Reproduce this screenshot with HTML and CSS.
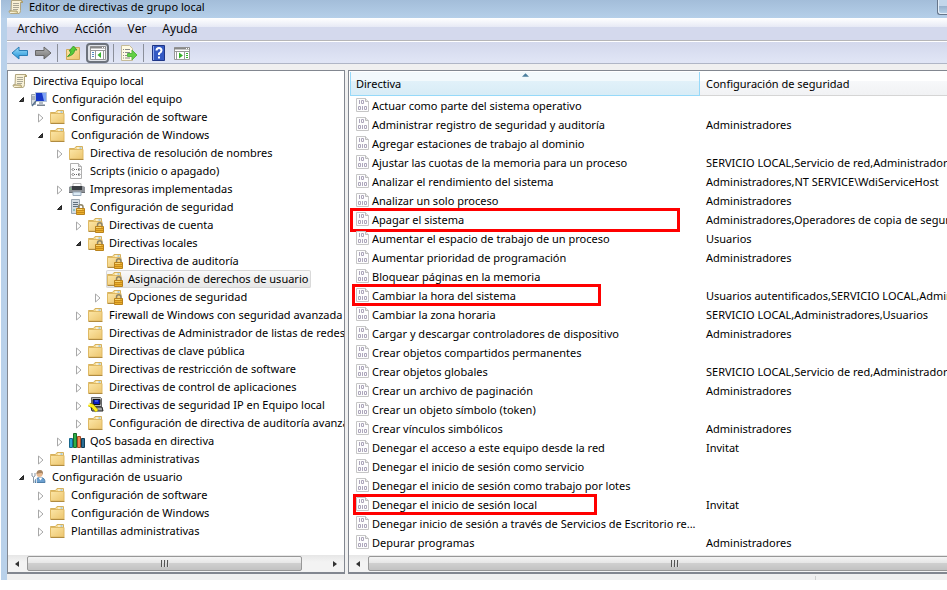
FILE: index.html
```html
<!DOCTYPE html>
<html lang="es">
<head>
<meta charset="utf-8">
<title>Editor de directivas de grupo local</title>
<link rel="stylesheet" href="styles.css">
</head>
<body>
<svg class="sprite" aria-hidden="true">
  <defs>
    <linearGradient id="gold" x1="0" y1="0" x2="1" y2="1"><stop offset="0" stop-color="#fce6a6"/><stop offset="1" stop-color="#ecc56e"/></linearGradient>
    <linearGradient id="blue" x1="0" y1="0" x2="0" y2="1"><stop offset="0" stop-color="#9fe0fb"/><stop offset="1" stop-color="#1c8fd6"/></linearGradient>
    <linearGradient id="grey" x1="0" y1="0" x2="0" y2="1"><stop offset="0" stop-color="#b5b5b5"/><stop offset="1" stop-color="#757575"/></linearGradient>
  </defs>
  <symbol id="folder" viewBox="0 0 16 16">
    <path d="M.500 4.500V3.500H5.500L7 1.500h6.500v3z" fill="#f5db90" stroke="#d6b15c"/>
    <path d="M8 3h5" stroke="#fff"/><path d="M10.500 3h2" stroke="#6aaee0"/>
    <path d="M.500 4.500h13.500v9.500h-13.500z" fill="url(#gold)" stroke="#dfb964"/>
    <path d="M.500 14.500h14" stroke="#b08b40"/>
  </symbol>
  <symbol id="lock" viewBox="0 0 16 16">
    <path d="M9.500 10V8a2 2 0 0 1 4.500 0v2" fill="none" stroke="#8d8468" stroke-width="1.500"/>
    <path d="M7.500 9.500h8v6h-8z" fill="#eab02f" stroke="#b9821c"/><path d="M8 11.500h7M8 13.500h7" stroke="#c98b18"/><path d="M8 10.500h5" stroke="#f7d672"/>
  </symbol>
  <symbol id="locked" viewBox="0 0 16 16"><use href="#folder"/><use href="#lock"/></symbol>
  <symbol id="scroll" viewBox="0 0 16 16">
    <path d="M3.500 1.500h9.500q1.500 0 1.500 2h-2v8q0 3-2 3h-8q-1.500-.500-1.500-2.500h2z" fill="#f8f1d6" stroke="#b0a57f"/>
    <path d="M5 4.500h6M5 6.500h6M5 8.500h6M5 10.500h5" stroke="#aaa796"/>
    <path d="M1.500 12h7.500q0 2 1.500 2.500" fill="#e6d7a0" stroke="#a89a6c"/><path d="M12.500 3.500h2q0-2-1.500-2" fill="#d9c88b" stroke="#a89a6c"/>
  </symbol>
  <symbol id="computer" viewBox="0 0 16 16">
    <path d="M.500 3.500h4v10h-4z" fill="#d8dde3" stroke="#9aa4ae"/><path d="M1 6h3M1 8h3" stroke="#7c8793"/>
    <path d="M4.500 1.500h11v9h-11z" fill="#1737c8" stroke="#b4c3d6"/><path d="M11 2h4v8h-2z" fill="#7ea3f6"/>
    <path d="M8 11h4v2h2v2H6v-2h2z" fill="#b2bac4"/><path d="M6 14.500h8" stroke="#78838f"/>
    <path d="M1 15l4-5" stroke="#59738f" stroke-width="1.500"/>
  </symbol>
  <symbol id="scripts" viewBox="0 0 16 16">
    <path d="M1.500.500h8l3 3v12h-11z" fill="#fcfcfc" stroke="#b0b0b0"/><path d="M9.500.500v3h3" fill="#ddd" stroke="#b0b0b0"/>
    <path d="M4.500 5L3 6.500 4.500 8M9.500 5L11 6.500 9.500 8M4.500 10L3 11.500 4.500 13M9.500 10l1.500 1.500L9.500 13" fill="none" stroke="#666"/>
    <path d="M5 6.500h1m1 0h1m1 0h1M5 11.500h1m1 0h1m1 0h1" stroke="#666"/>
  </symbol>
  <symbol id="printer" viewBox="0 0 16 16">
    <path d="M4 2.500h8v5H4z" fill="#fff" stroke="#bbb"/>
    <path d="M0 6l2-1h12l2 1v6H0z" fill="#8f9398"/><path d="M3 5h10v4H3z" fill="#3b3f44"/><path d="M0 11.500h16" stroke="#6c7075"/>
    <path d="M4 11h8v3.500H4z" fill="#dcebf5" stroke="#9ab"/><path d="M1 8h1" stroke="#6e6"/>
  </symbol>
  <symbol id="server" viewBox="0 0 16 16">
    <path d="M2.500.500h8v14h-8z" fill="#d5dde4" stroke="#9aa6b1"/><path d="M4 3.500h5M4 5.500h5M4 7.500h5" stroke="#61707e"/><path d="M4 11h2" stroke="#4a9"/><use href="#lock"/>
  </symbol>
  <symbol id="ipsec" viewBox="0 0 16 16">
    <path d="M3.500.500h9l1 1v8h-10z" fill="#b9b9b9" stroke="#666"/><path d="M5 2.500h7v5H5z" fill="#0a1cc0" stroke="#111"/><path d="M7 4h3" stroke="#6d8cff"/>
    <path d="M3 10h11l1 4H4z" fill="#a3a3a3" stroke="#222"/>
    <path d="M1 7.500l3.500 1.500L9 14" fill="none" stroke="#777000" stroke-width="4"/><path d="M.500 7.500l4 1.500L9 14" fill="none" stroke="#ffee18" stroke-width="3"/><path d="M0 7h2" stroke="#fff"/>
  </symbol>
  <symbol id="qos" viewBox="0 0 16 16">
    <path d="M.500 5.500h3v9h-3z" fill="#27a7d8" stroke="#17668c"/><path d="M4.500.500h3v14h-3z" fill="#2fae48" stroke="#176b2b"/>
    <path d="M8.500 3.500h3v11h-3z" fill="#f08450" stroke="#a84a20"/><path d="M12.500 5.500h3v9h-3z" fill="#2b6e93" stroke="#123c58"/>
  </symbol>
  <symbol id="user" viewBox="0 0 16 16">
    <path d="M4 13.500q0-5 5.500-5 4.500 0 4.500 5z" fill="#6b9fd0" stroke="#4f7fa9"/><path d="M7.500 8.500l2 3 2-3z" fill="#fff"/>
    <circle cx="8.500" cy="5" r="3" fill="#e8b990"/><path d="M5.500 5q0-4 3.500-4T12 6l-1-2q-3 0-5.500 1z" fill="#a58462"/>
    <path d="M1 4v3l1.500 1L4 7V4M2.500 8v6" fill="none" stroke="#8795a3"/><path d="M5.500 9v5" stroke="#d8dfe6"/>
  </symbol>
  <symbol id="policy" viewBox="0 0 14 14">
    <path d="M.500.500h9l3 3v10h-12z" fill="#fdfdfd" stroke="#c6c6c6"/><path d="M9.500.500v3h3" fill="#e8e8e8" stroke="#bcbcbc"/>
    <path d="M3.500 2v4M6.500 8v4" stroke="#aca6bb"/><path d="M5.500 2.500h2v3h-2zM2.500 8.500h2v3h-2zM8.500 8.500h2v3h-2z" fill="none" stroke="#aca6bb"/>
  </symbol>
  <symbol id="open" viewBox="0 0 12 12"><path d="M8.500 4.500v4h-4z" fill="#404040" stroke="#222"/></symbol>
  <symbol id="closed" viewBox="0 0 12 12"><path d="M4.500 3v8L9 7z" fill="#fff" stroke="#a8a8a8"/></symbol>
  <symbol id="left" viewBox="0 0 8 8"><path d="M6 1v6L2 4z" fill="#333"/></symbol>
  <symbol id="right" viewBox="0 0 8 8"><path d="M2 1v6l4-3z" fill="#333"/></symbol>
</svg>

<div class="window">
  <header class="titlebar">
    <svg class="icon"><use href="#scroll"/></svg>
    <h1>Editor de directivas de grupo local</h1>
    <button class="minimize" aria-label="Minimizar"></button>
  </header>
  <div class="client">
    <nav class="menu">
      <button>Archivo</button><button>Acción</button><button>Ver</button><button>Ayuda</button>
    </nav>
    <div class="toolbar">
      <button aria-label="Atrás"><svg viewBox="0 0 18 16"><path d="M1 8l7-6v3.500h8.500v5H8V14z" fill="url(#blue)" stroke="#2b7db5"/></svg></button>
      <button aria-label="Adelante"><svg viewBox="0 0 18 16"><path d="M17 8l-7-6v3.500H1.500v5H10V14z" fill="url(#grey)" stroke="#676767"/></svg></button>
      <i class="sep"></i>
      <button aria-label="Subir un nivel"><svg viewBox="0 0 18 16"><path d="M2.500 4.500h6l1-2h6v12h-13z" fill="url(#gold)" stroke="#d0a95c"/><path d="M3.500 11.500Q7 9 7 6H5l4.500-5L13 5h-2.500q0 5-7 6.500z" fill="#55cc38" stroke="#3da02f"/></svg></button>
      <button class="pressed" aria-label="Mostrar árbol" aria-pressed="true"><svg viewBox="0 0 18 16"><path d="M1.500 1.500h15v13h-15z" fill="#fff" stroke="#999"/><path d="M1 2.500h16" stroke="#888" stroke-width="2"/><path d="M13 2.500h1m1 0h1" stroke="#fff"/><path d="M1 5.500h16M6.500 6v8M14.500 6v8" stroke="#999"/><path d="M3 7.500h2M3 9.500h2M3 11.500h2" stroke="#588bc4"/><path d="M12 7v6L8.500 10z" fill="#36b32a"/></svg></button>
      <i class="sep"></i>
      <button aria-label="Exportar lista"><svg viewBox="0 0 18 16"><path d="M1.500.500h8l3 3v12h-11z" fill="#fffbe4" stroke="#c5bb98"/><path d="M3 4.500h1m1 0h5M3 7.500h1m1 0h5M3 10.500h1m1 0h4M3 13h1m1 0h5" stroke="#8b8b8b"/><path d="M7.500 8.500H12V5l5 5-5 5v-3.500H7.500z" fill="#61d144" stroke="#58b548"/></svg></button>
      <i class="sep"></i>
      <button aria-label="Ayuda"><svg viewBox="0 0 18 16"><path d="M2.500.500h12v15h-12z" fill="#3459c4" stroke="#1e3586"/><path d="M3.500 1v14" stroke="#8ba7ee"/><path d="M6.500 5.500Q6.500 3 9 3t2.500 2.500Q11.500 7 9 8.500V10" fill="none" stroke="#fff" stroke-width="2"/><path d="M8 11.500h2v2H8z" fill="#fff"/></svg></button>
      <button aria-label="Mostrar panel de acciones"><svg viewBox="0 0 18 16"><path d="M1.500 2.500h15v12h-15z" fill="#fff" stroke="#999"/><path d="M1 3.500h16" stroke="#888" stroke-width="2"/><path d="M13 3.500h1m1 0h1" stroke="#fff"/><path d="M1 6.500h16M11.500 7v7M3.500 7v7" stroke="#999"/><path d="M13 8.500h2M13 10.500h2M13 12.500h2" stroke="#36b32a"/><path d="M6 7.500v6l4-3z" fill="#36b32a"/></svg></button>
    </div>
    <main class="panes">
      <section class="pane">
        <ul class="tree">
          <li class="root"><span class="node"><svg class="icon"><use href="#scroll"/></svg>Directiva Equipo local</span></li>
          <li class="l1"><svg class="arrow"><use href="#open"/></svg><span class="node"><svg class="icon"><use href="#computer"/></svg>Configuración del equipo</span></li>
          <li class="l2"><svg class="arrow"><use href="#closed"/></svg><span class="node"><svg class="icon"><use href="#folder"/></svg>Configuración de software</span></li>
          <li class="l2"><svg class="arrow"><use href="#open"/></svg><span class="node"><svg class="icon"><use href="#folder"/></svg>Configuración de Windows</span></li>
          <li class="l3"><svg class="arrow"><use href="#closed"/></svg><span class="node"><svg class="icon"><use href="#folder"/></svg>Directiva de resolución de nombres</span></li>
          <li class="l3"><svg class="arrow"></svg><span class="node"><svg class="icon"><use href="#scripts"/></svg>Scripts (inicio o apagado)</span></li>
          <li class="l3"><svg class="arrow"><use href="#closed"/></svg><span class="node"><svg class="icon"><use href="#printer"/></svg>Impresoras implementadas</span></li>
          <li class="l3"><svg class="arrow"><use href="#open"/></svg><span class="node"><svg class="icon"><use href="#server"/></svg>Configuración de seguridad</span></li>
          <li class="l4"><svg class="arrow"><use href="#closed"/></svg><span class="node"><svg class="icon"><use href="#locked"/></svg>Directivas de cuenta</span></li>
          <li class="l4"><svg class="arrow"><use href="#open"/></svg><span class="node"><svg class="icon"><use href="#locked"/></svg>Directivas locales</span></li>
          <li class="l5"><svg class="arrow"></svg><span class="node"><svg class="icon"><use href="#locked"/></svg>Directiva de auditoría</span></li>
          <li class="l5"><svg class="arrow"></svg><span class="node selected"><svg class="icon"><use href="#locked"/></svg>Asignación de derechos de usuario</span></li>
          <li class="l5"><svg class="arrow"><use href="#closed"/></svg><span class="node"><svg class="icon"><use href="#locked"/></svg>Opciones de seguridad</span></li>
          <li class="l4"><svg class="arrow"><use href="#closed"/></svg><span class="node"><svg class="icon"><use href="#folder"/></svg>Firewall de Windows con seguridad avanzada</span></li>
          <li class="l4"><svg class="arrow"></svg><span class="node"><svg class="icon"><use href="#folder"/></svg>Directivas de Administrador de listas de redes</span></li>
          <li class="l4"><svg class="arrow"><use href="#closed"/></svg><span class="node"><svg class="icon"><use href="#folder"/></svg>Directivas de clave pública</span></li>
          <li class="l4"><svg class="arrow"><use href="#closed"/></svg><span class="node"><svg class="icon"><use href="#folder"/></svg>Directivas de restricción de software</span></li>
          <li class="l4"><svg class="arrow"><use href="#closed"/></svg><span class="node"><svg class="icon"><use href="#folder"/></svg>Directivas de control de aplicaciones</span></li>
          <li class="l4"><svg class="arrow"><use href="#closed"/></svg><span class="node"><svg class="icon"><use href="#ipsec"/></svg>Directivas de seguridad IP en Equipo local</span></li>
          <li class="l4"><svg class="arrow"><use href="#closed"/></svg><span class="node"><svg class="icon"><use href="#folder"/></svg>Configuración de directiva de auditoría avanzada</span></li>
          <li class="l3"><svg class="arrow"><use href="#closed"/></svg><span class="node"><svg class="icon"><use href="#qos"/></svg>QoS basada en directiva</span></li>
          <li class="l2"><svg class="arrow"><use href="#closed"/></svg><span class="node"><svg class="icon"><use href="#folder"/></svg>Plantillas administrativas</span></li>
          <li class="l1"><svg class="arrow"><use href="#open"/></svg><span class="node"><svg class="icon"><use href="#user"/></svg>Configuración de usuario</span></li>
          <li class="l2"><svg class="arrow"><use href="#closed"/></svg><span class="node"><svg class="icon"><use href="#folder"/></svg>Configuración de software</span></li>
          <li class="l2"><svg class="arrow"><use href="#closed"/></svg><span class="node"><svg class="icon"><use href="#folder"/></svg>Configuración de Windows</span></li>
          <li class="l2"><svg class="arrow"><use href="#closed"/></svg><span class="node"><svg class="icon"><use href="#folder"/></svg>Plantillas administrativas</span></li>
        </ul>
        <div class="scrollbar">
          <button aria-label="Izquierda"><svg><use href="#left"/></svg></button>
          <div class="track"><div class="thumb"><i></i><i></i><i></i></div></div>
          <button aria-label="Derecha"><svg><use href="#right"/></svg></button>
        </div>
      </section>
      <section class="pane list">
        <div class="rows">
        <table>
          <colgroup><col class="name"><col></colgroup>
          <thead><tr><th class="sorted">Directiva<svg class="sort" viewBox="0 0 8 4"><path d="M0 4l4-4 4 4z" fill="#4b7f9e"/></svg></th><th>Configuración de seguridad</th></tr></thead>
          <tbody>
            <tr><td><svg><use href="#policy"/></svg>Actuar como parte del sistema operativo</td><td></td></tr>
            <tr><td><svg><use href="#policy"/></svg>Administrar registro de seguridad y auditoría</td><td>Administradores</td></tr>
            <tr><td><svg><use href="#policy"/></svg>Agregar estaciones de trabajo al dominio</td><td></td></tr>
            <tr><td><svg><use href="#policy"/></svg>Ajustar las cuotas de la memoria para un proceso</td><td>SERVICIO LOCAL,Servicio de red,Administradores</td></tr>
            <tr><td><svg><use href="#policy"/></svg>Analizar el rendimiento del sistema</td><td>Administradores,NT SERVICE\WdiServiceHost</td></tr>
            <tr><td><svg><use href="#policy"/></svg>Analizar un solo proceso</td><td>Administradores</td></tr>
            <tr><td><svg><use href="#policy"/></svg>Apagar el sistema<span class="mark shutdown"></span></td><td>Administradores,Operadores de copia de seguridad</td></tr>
            <tr><td><svg><use href="#policy"/></svg>Aumentar el espacio de trabajo de un proceso</td><td>Usuarios</td></tr>
            <tr><td><svg><use href="#policy"/></svg>Aumentar prioridad de programación</td><td>Administradores</td></tr>
            <tr><td><svg><use href="#policy"/></svg>Bloquear páginas en la memoria</td><td></td></tr>
            <tr><td><svg><use href="#policy"/></svg>Cambiar la hora del sistema<span class="mark clock"></span></td><td>Usuarios autentificados,SERVICIO LOCAL,Administradores</td></tr>
            <tr><td><svg><use href="#policy"/></svg>Cambiar la zona horaria</td><td>SERVICIO LOCAL,Administradores,Usuarios</td></tr>
            <tr><td><svg><use href="#policy"/></svg>Cargar y descargar controladores de dispositivo</td><td>Administradores</td></tr>
            <tr><td><svg><use href="#policy"/></svg>Crear objetos compartidos permanentes</td><td></td></tr>
            <tr><td><svg><use href="#policy"/></svg>Crear objetos globales</td><td>SERVICIO LOCAL,Servicio de red,Administradores</td></tr>
            <tr><td><svg><use href="#policy"/></svg>Crear un archivo de paginación</td><td>Administradores</td></tr>
            <tr><td><svg><use href="#policy"/></svg>Crear un objeto símbolo (token)</td><td></td></tr>
            <tr><td><svg><use href="#policy"/></svg>Crear vínculos simbólicos</td><td>Administradores</td></tr>
            <tr><td><svg><use href="#policy"/></svg>Denegar el acceso a este equipo desde la red</td><td>Invitat</td></tr>
            <tr><td><svg><use href="#policy"/></svg>Denegar el inicio de sesión como servicio</td><td></td></tr>
            <tr><td><svg><use href="#policy"/></svg>Denegar el inicio de sesión como trabajo por lotes</td><td></td></tr>
            <tr><td><svg><use href="#policy"/></svg>Denegar el inicio de sesión local<span class="mark logon"></span></td><td>Invitat</td></tr>
            <tr><td><svg><use href="#policy"/></svg>Denegar inicio de sesión a través de Servicios de Escritorio re...</td><td></td></tr>
            <tr><td><svg><use href="#policy"/></svg>Depurar programas</td><td>Administradores</td></tr>
            <tr><td><svg><use href="#policy"/></svg></td><td></td></tr>
          </tbody>
        </table>
        </div>
        <div class="scrollbar">
          <button aria-label="Izquierda"><svg><use href="#left"/></svg></button>
          <div class="track"><div class="thumb wide"><i></i><i></i><i></i></div></div>
        </div>
      </section>
    </main>
    <footer class="status"><span></span></footer>
  </div>
</div>
</body>
</html>
```
FILE: styles.css
```css
* { box-sizing: border-box; }

body {
  margin: 0;
  height: 100vh;
  padding: 0 0 10px 1px;
  overflow: hidden;
  background: #fff;
  color: #000;
  font: 11px/18px "Noto Sans", "Open Sans", sans-serif;
}

button {
  margin: 0;
  padding: 0;
  border: 0;
  background: none;
  color: inherit;
  font: inherit;
}

svg { display: block; flex: none; }
.sprite { position: absolute; width: 0; height: 0; }
.icon { width: 16px; height: 16px; }

.window {
  display: flex;
  flex-direction: column;
  height: 100%;
  padding-left: 6px;
  background: #b9d1ea;
}

.titlebar {
  display: flex;
  align-items: center;
  gap: 5px;
  height: 18px;
  margin-left: -6px;
  padding: 0 0 4px 7px;
  background: linear-gradient(#a3bdd9, #b5cfe9);
}
.titlebar h1 { flex: 1; margin: 0; font-size: 11px; font-weight: 400; line-height: 14px; }
.minimize {
  align-self: flex-start;
  width: 10px;
  height: 15px;
  border: solid #66758a;
  border-width: 0 0 1px 1px;
  border-radius: 0 0 0 3px;
  background: linear-gradient(#c3d6ea 40%, #95afcb 40%, #b9d3ea);
  box-shadow: inset 1px -1px #e4eef8;
}

.client { flex: 1; min-height: 0; display: flex; flex-direction: column; background: #f0f0f0; }

.menu {
  display: flex;
  gap: 16px;
  height: 23px;
  padding: 2px 10px;
  border-bottom: 1px solid #b6b6b8;
  background: linear-gradient(#fff, #e7eaf5 40%, #d4d9ed 40%, #d4d9ed);
  font-family: "Open Sans", "Noto Sans", sans-serif;
  font-size: 12px;
}

.toolbar {
  display: flex;
  align-items: center;
  gap: 3px;
  height: 23px;
  padding: 0 3px;
  border-top: 1px solid #fff;
  border-bottom: 1px solid #b0b6c6;
  background: linear-gradient(#d3d8ec, #e1e6f6);
}
.toolbar button { display: grid; place-items: center; width: 20px; height: 20px; }
.toolbar button svg { width: 18px; height: 16px; }
.toolbar .pressed { width: 23px; border: 2px solid #6c727c; border-radius: 4px; background: #dfe2e8; }
.sep { width: 1px; height: 18px; margin: 0 2px 0 1px; background: #8b8f9a; }

.panes {
  flex: 1;
  min-height: 0;
  display: grid;
  grid-template-columns: 338px minmax(0, 1fr);
  gap: 3px;
  padding-top: 6px;
}
.pane {
  display: flex;
  flex-direction: column;
  min-width: 0;
  min-height: 0;
  border: 1px solid #828790;
  border-bottom-width: 2px;
  background: #fff;
}
.list { border-right: 0; }

.tree { flex: 1; min-height: 0; margin: 0; padding: 1px 0 0; overflow: hidden; list-style: none; white-space: nowrap; }
.tree li { display: flex; align-items: center; gap: 3px; height: 18px; }
.arrow { width: 12px; height: 12px; }
.node { display: flex; align-items: center; gap: 5px; height: 18px; padding: 0 3px 0 1px; }
.selected { border-radius: 2px; background: linear-gradient(#fafafa, #e5e5e5); box-shadow: inset 0 0 0 1px #d9d9d9; }
.root { padding-left: 3px; }
.l1 { padding-left: 7px; }
.l2 { padding-left: 26px; }
.l3 { padding-left: 45px; }
.l4 { padding-left: 64px; }
.l5 { padding-left: 83px; }

.rows { flex: 1; min-height: 0; padding: 1px 0 0 1px; overflow: hidden; }
table { width: 100%; table-layout: fixed; border-collapse: separate; border-spacing: 0; }
.name { width: 350px; }
th {
  position: relative;
  height: 24px;
  padding: 0 6px;
  border-bottom: 1px solid #d5d5d5;
  background: linear-gradient(#fff 40%, #f7f8fa 40%, #f1f2f4);
  font-weight: 400;
  text-align: left;
}
.sorted {
  border: 1px solid #96d9f9;
  border-top: 0;
  padding: 0 5px;
  background: linear-gradient(#f2f9fc 40%, #e1f1f9 40%, #d8ecf6);
}
.sort { position: absolute; top: 1px; left: 49%; width: 7px; height: 4px; }
td { position: relative; height: 19px; padding: 0 0 0 6px; line-height: 19px; white-space: nowrap; }
td:last-child { overflow: hidden; }
td svg { float: left; width: 14px; height: 14px; margin: 2px 2px 0 0; }

.mark { position: absolute; border: 3px solid #f00; }
.shutdown { top: -2px; left: 0; width: 330px; height: 24px; }
.clock { top: -2px; left: 2px; width: 249px; height: 22px; }
.logon { top: -1px; left: 3px; width: 244px; height: 21px; }

.scrollbar { display: flex; height: 17px; background: linear-gradient(#e6e6e6, #f3f3f3 40%); }
.scrollbar button { display: grid; place-items: center; width: 18px; }
.scrollbar button svg { width: 8px; height: 8px; }
.track { flex: 1; min-width: 0; overflow: hidden; padding: 1px 0 1px 1px; }
.thumb {
  display: flex;
  align-items: center;
  justify-content: center;
  gap: 1px;
  width: 92%;
  height: 15px;
  border: 1px solid #979797;
  border-radius: 2px;
  background: linear-gradient(#f4f4f4, #e6e6e6 45%, #cfcfcf 50%, #c2c2c2);
}
.wide { width: 614px; }
.thumb i { width: 2px; height: 7px; background: linear-gradient(90deg, #555 50%, #ddd 50%); }

.status { display: flex; height: 6px; padding-top: 2px; }
.status span { width: 809px; border-right: 1px solid #d0d0d0; }
```
